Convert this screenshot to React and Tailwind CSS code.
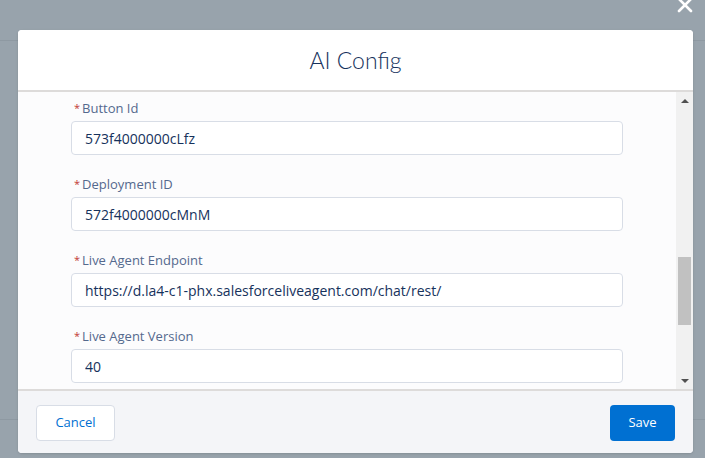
import { useState } from 'react';

const fields = [
  { key: 'buttonId', label: 'Button Id', value: '573f4000000cLfz' },
  { key: 'deploymentId', label: 'Deployment ID', value: '572f4000000cMnM' },
  { key: 'endpoint', label: 'Live Agent Endpoint', value: 'https://d.la4-c1-phx.salesforceliveagent.com/chat/rest/' },
  { key: 'version', label: 'Live Agent Version', value: '40' },
];

function Field({ label, value, onChange }) {
  return (
    <div className="flex flex-col">
      <label className="h-[18px] mb-[4px] pl-[3px] text-[13px] leading-[18px] text-[#54698d]">
        <abbr className="no-underline text-[#c23934] mr-[2px] text-[11px] align-top">*</abbr>
        {label}
      </label>
      <input
        type="text"
        value={value}
        onChange={e => onChange(e.target.value)}
        className="h-[34px] w-full rounded-[4px] border border-[#d8dde6] bg-white px-[13px] text-[14px] text-[#16325c] outline-none"
      />
    </div>
  );
}

export default function App() {
  const [values, setValues] = useState(Object.fromEntries(fields.map(f => [f.key, f.value])));

  return (
    <div className="relative h-[458px] w-[705px] overflow-hidden bg-[#98a3ac] font-['Open_Sans',sans-serif]">
      {/* page behind the overlay */}
      <div className="h-[41px] border-b border-[#8e99a2]" />
      <div className="h-[379px] border-b border-[#8e99a2]" />

      {/* close */}
      <button type="button" className="absolute right-[12px] top-[-3px] h-[16px] w-[16px]">
        <svg viewBox="0 0 16 16" className="h-[16px] w-[16px]">
          <path d="M2 2 L14 14 M14 2 L2 14" stroke="white" strokeWidth="2.6" strokeLinecap="round" />
        </svg>
      </button>

      {/* modal */}
      <div className="absolute left-[18px] top-[30px] flex w-[675px] flex-col overflow-hidden rounded-[4px] bg-white shadow-sm">
        <div className="flex h-[62px] items-center justify-center border-b-2 border-[#dddbda] bg-white">
          <h2 className="font-['Lato',sans-serif] text-[23px] font-light text-[#16325c]">AI Config</h2>
        </div>

        <div className="flex h-[297px] bg-[#fcfcfd]">
          <div className="flex flex-1 flex-col gap-[20px] px-[53px] pt-[7px]">
            {fields.map(f => (
              <Field
                key={f.key}
                label={f.label}
                value={values[f.key]}
                onChange={v => setValues(prev => ({ ...prev, [f.key]: v }))}
              />
            ))}
          </div>
          <div className="flex w-[17px] flex-col items-center bg-[#f1f1f1]">
            <div className="flex h-[17px] w-full items-center justify-center">
              <svg viewBox="0 0 8 4" className="h-[4px] w-[8px]"><path d="M0 4 L4 0 L8 4 Z" fill="#505050" /></svg>
            </div>
            <div className="h-[148px]" />
            <div className="h-[68px] w-[13px] bg-[#c1c1c1]" />
            <div className="flex-1" />
            <div className="flex h-[17px] w-full items-center justify-center">
              <svg viewBox="0 0 8 4" className="h-[4px] w-[8px]"><path d="M0 0 L4 4 L8 0 Z" fill="#505050" /></svg>
            </div>
          </div>
        </div>

        <div className="flex h-[64px] items-start justify-between border-t-2 border-[#dddbda] bg-[#f4f5f8] px-[18px] pt-[14px]">
          <button
            type="button"
            className="h-[36px] w-[79px] rounded-[4px] border border-[#d8dde6] bg-white text-[13px] text-[#0070d2]"
          >
            Cancel
          </button>
          <button
            type="button"
            className="h-[36px] w-[65px] rounded-[4px] bg-[#0070d2] text-[13px] text-white"
          >
            Save
          </button>
        </div>
      </div>
    </div>
  );
}
